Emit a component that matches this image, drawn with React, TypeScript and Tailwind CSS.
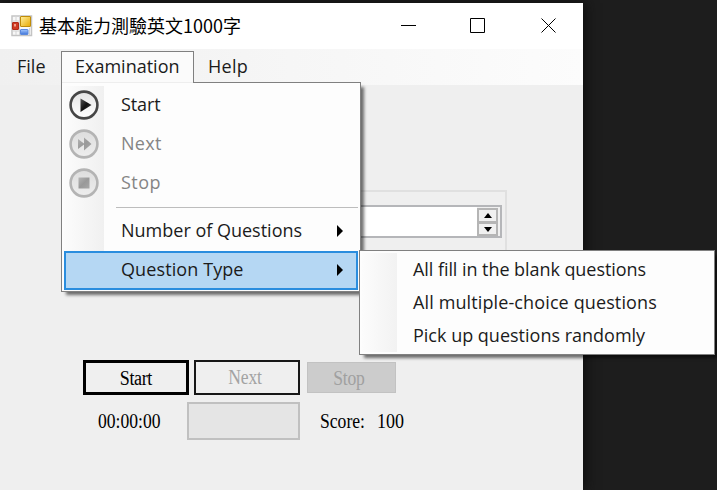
import type { ReactNode } from "react";

const menuFont = "font-['Open_Sans','Noto_Sans_CJK_TC',sans-serif]";
const formFont = "font-['Liberation_Serif','Noto_Sans_CJK_TC',serif]";

function AppIcon() {
  return (
    <svg width="22" height="22" viewBox="0 0 22 22" className="shrink-0">
      <defs>
        <linearGradient id="gold" x1="0" y1="0" x2="1" y2="1">
          <stop offset="0" stopColor="#fff0a0" />
          <stop offset="1" stopColor="#e8a900" />
        </linearGradient>
        <linearGradient id="blue" x1="0" y1="0" x2="0" y2="1">
          <stop offset="0" stopColor="#a4c8ff" />
          <stop offset="1" stopColor="#3f74d8" />
        </linearGradient>
      </defs>
      <rect x="1" y="1" width="19.500" height="19.500" fill="#f8f8f8" stroke="#c4c4c4" strokeWidth="1.500" />
      <path d="M8.500 1v19M1 6h8M1 16h8M5 1v5M5 16v4M18.500 13v7" stroke="#d4d4d4" />
      <rect x="9.500" y="1.500" width="10" height="10" rx="0.500" fill="url(#gold)" stroke="#c08c08" />
      <rect x="1.500" y="7.500" width="6" height="7" rx="0.500" fill="#cf3a22" stroke="#b02a18" />
      <rect x="3" y="9" width="2" height="2.500" fill="#f0a08a" />
      <rect x="9.500" y="14.500" width="7.500" height="5" rx="0.500" fill="url(#blue)" stroke="#5b88dc" />
    </svg>
  );
}

function CircleIcon({ kind }: { kind: "start" | "next" | "stop" }) {
  const on = kind === "start";
  return (
    <svg width="30" height="30" viewBox="0 0 30 30" className="shrink-0">
      <defs>
        <linearGradient id={`disc-${kind}`} x1="0" y1="0" x2="0" y2="1">
          <stop offset="0" stopColor={on ? "#e4e4e4" : "#dddddd"} />
          <stop offset="1" stopColor={on ? "#ffffff" : "#eeeeee"} />
        </linearGradient>
        <linearGradient id={`glyph-${kind}`} x1="0" y1="0" x2="1" y2="1">
          <stop offset="0" stopColor={on ? "#555555" : "#b5b5b5"} />
          <stop offset="0.5" stopColor={on ? "#111111" : "#999999"} />
          <stop offset="1" stopColor={on ? "#444444" : "#a8a8a8"} />
        </linearGradient>
      </defs>
      <circle cx="15" cy="15" r="13.400" fill={`url(#disc-${kind})`} stroke={on ? "#464646" : "#b4b4b4"} strokeWidth="2.600" />
      {kind === "start" && <path d="M11.500 8.500 22.500 15l-11 7z" fill="url(#glyph-start)" />}
      {kind === "next" && <path d="M9 10l6 4.500V8.500l7.500 6.500-7.500 6.500v-6L9 20z" fill="url(#glyph-next)" />}
      {kind === "stop" && <rect x="9.500" y="9.500" width="11" height="11" fill="url(#glyph-stop)" />}
    </svg>
  );
}

function MenuRow({ icon, text, spacing = "", disabled, arrow, selected }: {
  icon?: ReactNode; text: string; spacing?: string; disabled?: boolean; arrow?: boolean; selected?: boolean;
}) {
  return (
    <div className={`flex h-[39px] items-center pb-[2px] ${selected ? "bg-[#b5d7f3] outline-2 -outline-offset-2 outline-[#2a8dde]" : ""}`}>
      <div className="w-[57px] shrink-0 pl-[5px]">{icon}</div>
      <span className={`grow whitespace-nowrap ${spacing} ${disabled ? "text-[#858585]" : "text-[#1b1b1b]"}`}>{text}</span>
      {arrow && (
        <svg width="6" height="12" viewBox="0 0 6 12" className="mr-[15px] mt-px">
          <path d="M0 0l6 6-6 6z" fill="#000" />
        </svg>
      )}
    </div>
  );
}

function ExaminationMenu() {
  return (
    <div className={`absolute left-[61px] top-[82px] h-[210px] w-[300px] border border-[#808080] bg-[#fdfdfd] px-[2px] pt-[3px] text-[18px] shadow-[4px_4px_3px_-1px_rgba(0,0,0,0.55)] ${menuFont}`}>
      <div className="bg-[linear-gradient(90deg,#fcfcfc,#f0f0f0_40px,#fdfdfd_40px)]">
        <MenuRow icon={<CircleIcon kind="start" />} text="Start" spacing="tracking-[-0.1px]" />
        <MenuRow icon={<CircleIcon kind="next" />} text="Next" spacing="tracking-[0.3px]" disabled />
        <MenuRow icon={<CircleIcon kind="stop" />} text="Stop" spacing="tracking-[0.5px]" disabled />
        <div className="h-[9px] pl-[52px] pt-[4px]"><div className="h-px bg-[#bdbdbd]" /></div>
        <MenuRow text="Number of Questions" arrow />
      </div>
      <MenuRow text="Question Type" spacing="tracking-[0.1px]" arrow selected />
    </div>
  );
}

function TypeSubmenu() {
  return (
    <div className={`absolute left-[359px] top-[250px] h-[105px] w-[356px] border border-[#808080] bg-[#fdfdfd] p-[2px] text-[18px] text-[#1b1b1b] shadow-[4px_4px_3px_-1px_rgba(0,0,0,0.55)] ${menuFont}`}>
      <div className="h-full bg-[linear-gradient(90deg,#fcfcfc,#f2f2f2_35px,#fdfdfd_35px)] pl-[51px]">
        <div className="flex h-[33px] items-center whitespace-nowrap tracking-[-0.06px]">All fill in the blank questions</div>
        <div className="flex h-[33px] items-center whitespace-nowrap tracking-[0.12px]">All multiple-choice questions</div>
        <div className="flex h-[33px] items-center whitespace-nowrap">Pick up questions randomly</div>
      </div>
    </div>
  );
}

function Spinner() {
  return (
    <div className="flex w-[23px] flex-col pt-px">
      <div className="flex h-[14px] w-[21px] items-center justify-center border-2 border-b border-[#b5b5b5] bg-[#f0f0f0]">
        <svg width="8" height="5"><path d="M4 0l4 5H0z" /></svg>
      </div>
      <div className="flex h-[14px] w-[21px] items-center justify-center border-2 border-[#b5b5b5] bg-[#f0f0f0]">
        <svg width="8" height="5"><path d="M0 0h8L4 5z" /></svg>
      </div>
    </div>
  );
}

export default function App() {
  return (
    <div className="relative h-[490px] w-[717px] overflow-hidden bg-[#1d1d1d] pt-[3px]">
      <div className="flex h-[487px] w-[583px] flex-col bg-[#efefef] shadow-[2px_0_12px_#0c0c0c]">
        <header className="flex h-[46px] shrink-0 items-center bg-white pl-[11px] text-black">
          <AppIcon />
          <h1 className="ml-[6px] grow whitespace-nowrap pb-[2px] font-['Noto_Sans_CJK_TC',sans-serif] text-[18px] font-normal">基本能力測驗英文1000字</h1>
          <svg width="156" height="17" viewBox="0 0 156 17" className="mr-[26px] mt-[-1px]" fill="none" stroke="#000">
            <path d="M0 8.500h15" />
            <path d="M69.500 1.500h14v14h-14z" />
            <path d="M140.500 1.500l14 14M154.500 1.500l-14 14" strokeWidth="1" />
          </svg>
        </header>
        <nav className={`flex h-[36px] shrink-0 bg-[linear-gradient(90deg,#f0f0f0,#fcfcfc)] pt-[2px] text-[18px] text-[#1b1b1b] ${menuFont}`}>
          <div className="flex h-[32px] w-[61px] items-center pb-[2px] pl-[17px]">File</div>
          <div className="flex h-[34px] w-[133px] items-center border border-b-0 border-[#808080] bg-[#fbfbfb] pb-[4px] pl-[13px]">Examination</div>
          <div className="flex h-[32px] items-center pb-[2px] pl-[14px] tracking-[0.3px]">Help</div>
        </nav>
        <main className={`flex grow flex-col text-[20px] text-black ${formFont}`}>
          <section className="ml-[80px] mt-[105px] h-[75px] w-[427px] border-2 border-[#e0e0e0] pt-[13px]">
            <div className="ml-[20px] flex h-[33px] w-[400px] justify-end border-2 border-[#b5b6b9] bg-white">
              <div className="bg-[#f0f0f0]"><Spinner /></div>
            </div>
          </section>
          <div className="ml-[83px] mt-[94px] flex h-[36px] items-center">
            <button className="h-[35px] w-[106px] border-3 border-black pb-[3px] pr-px"><span className="inline-block scale-x-90 tracking-[-0.4px]">Start</span></button>
            <button className="ml-[5px] h-[35px] w-[106px] border-2 border-[#171717] pb-px pr-[3px] text-[#a3a3a3]"><span className="inline-block scale-x-88 tracking-[-0.2px]">Next</span></button>
            <button className="ml-[7px] h-[31px] w-[89px] border border-[#c2c2c2] bg-[#cccccc] pb-[3px] pr-[6px] text-[#a0a0a0]"><span className="inline-block scale-x-88 tracking-[-0.2px]">Stop</span></button>
          </div>
          <div className="ml-[98px] mt-[7px] flex h-[37px] items-center">
            <span className="w-[89px] shrink-0"><span className="inline-block origin-left scale-x-88">00:00:00</span></span>
            <div className="h-[38px] w-[113px] shrink-0 border-2 border-[#c0c0c0] bg-[#e5e5e5]" />
            <span className="ml-[20px] w-[57px]"><span className="inline-block origin-left scale-x-88">Score:</span></span>
            <span className="inline-block origin-left scale-x-90">100</span>
          </div>
        </main>
      </div>
      <ExaminationMenu />
      <div className="absolute left-[62px] top-[82px] h-px w-[131px] bg-[#eeeeee]" />
      <TypeSubmenu />
    </div>
  );
}
